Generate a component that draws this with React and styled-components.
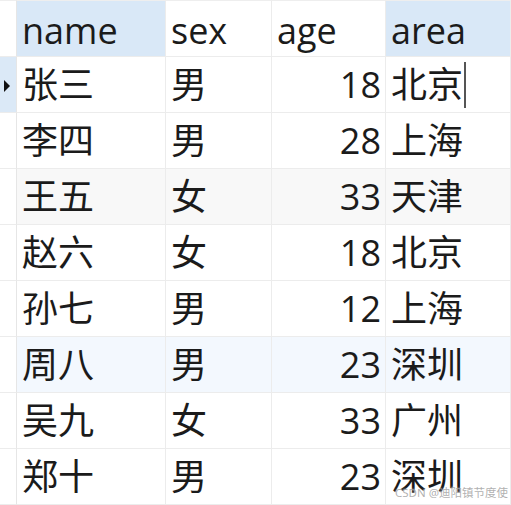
import React from "react";
import styled, { createGlobalStyle } from "styled-components";

const GlobalStyle = createGlobalStyle`
  html, body {
    margin: 0;
    padding: 0;
    background: #ffffff;
    overflow: hidden;
  }
`;

const columns = [
  { key: "name", label: "name", align: "left", headerActive: true },
  { key: "sex", label: "sex", align: "left" },
  { key: "age", label: "age", align: "right" },
  { key: "area", label: "area", align: "left", headerActive: true },
];

const rows = [
  { name: "张三", sex: "男", age: 18, area: "北京", bg: "white", current: true },
  { name: "李四", sex: "男", age: 28, area: "上海", bg: "white" },
  { name: "王五", sex: "女", age: 33, area: "天津", bg: "grey" },
  { name: "赵六", sex: "女", age: 18, area: "北京", bg: "white" },
  { name: "孙七", sex: "男", age: 12, area: "上海", bg: "white" },
  { name: "周八", sex: "男", age: 23, area: "深圳", bg: "blue" },
  { name: "吴九", sex: "女", age: 33, area: "广州", bg: "white" },
  { name: "郑十", sex: "男", age: 23, area: "深圳", bg: "white" },
];

const rowBg = {
  white: "#ffffff",
  grey: "#f8f8f8",
  blue: "#f3f8fe",
};

const Page = styled.div`
  position: relative;
  width: 511px;
  height: 505px;
  overflow: hidden;
  font-family: "Open Sans", "Noto Sans CJK SC", sans-serif;
  color: #1b1b1b;
`;

const Grid = styled.div`
  display: grid;
  grid-template-columns: 17px 149px 106px 114px 1fr;
`;

const Row = styled.div`
  display: contents;
`;

const Cell = styled.div`
  box-sizing: border-box;
  height: 56px;
  border-right: 1px solid #ececec;
  border-bottom: 1px solid #ececec;
  background: ${(p) => p.$bg};
  font-size: 36px;
  line-height: 1;
  display: flex;
  align-items: center;
  justify-content: ${(p) => (p.$align === "right" ? "flex-end" : "flex-start")};
  padding: ${(p) => (p.$align === "right" ? "1px 4px 0 0" : "1px 0 0 5px")};
  position: relative;
  white-space: nowrap;
`;

const HeaderCell = styled(Cell)`
  height: 57px;
  border-top: 1px solid #eeeeee;
  padding-top: 4px;
`;

const Indicator = styled.div`
  box-sizing: border-box;
  height: ${(p) => (p.$header ? "57px" : "56px")};
  border-right: 1px solid #e6e6e6;
  border-bottom: 1px solid #ececec;
  border-top: ${(p) => (p.$header ? "1px solid #eeeeee" : "none")};
  background: ${(p) => (p.$current ? "#dbe9f7" : "#ffffff")};
  display: flex;
  align-items: center;
  padding-left: 4px;
`;

const Arrow = styled.span`
  width: 0;
  height: 0;
  border-top: 6px solid transparent;
  border-bottom: 6px solid transparent;
  border-left: 6px solid #111111;
  margin-top: 2px;
`;

const Caret = styled.span`
  display: inline-block;
  width: 2px;
  height: 46px;
  background: #555555;
  margin-left: 1px;
`;

const Watermark = styled.div`
  position: absolute;
  right: 3px;
  bottom: 5px;
  font-family: "Noto Sans", "Noto Sans CJK SC", sans-serif;
  font-size: 11.5px;
  color: rgba(150, 150, 150, 0.75);
  text-shadow: 0 0 2px #ffffff;
`;

export default function App() {
  return (
    <>
      <GlobalStyle />
      <Page>
        <Grid>
          <Row>
            <Indicator $header />
            {columns.map((c) => (
              <HeaderCell
                key={c.key}
                $align="left"
                $bg={c.headerActive ? "#d9e8f7" : "#ffffff"}
              >
                {c.label}
              </HeaderCell>
            ))}
          </Row>
          {rows.map((r) => (
            <Row key={r.name}>
              <Indicator $current={r.current}>{r.current && <Arrow />}</Indicator>
              {columns.map((c) => (
                <Cell key={c.key} $align={c.align} $bg={rowBg[r.bg]}>
                  {r[c.key]}
                  {r.current && c.key === "area" && <Caret />}
                </Cell>
              ))}
            </Row>
          ))}
        </Grid>
        <Watermark>CSDN @迪阳镇节度使</Watermark>
      </Page>
    </>
  );
}
